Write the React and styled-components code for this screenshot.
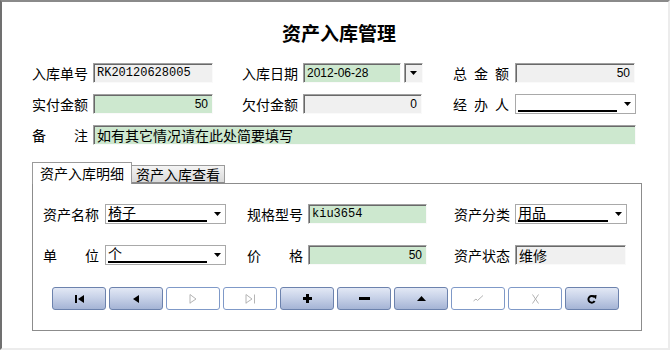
import React from "react";
import styled, { createGlobalStyle } from "styled-components";

const GlobalStyle = createGlobalStyle`
  html, body {
    margin: 0;
    padding: 0;
    background: #fff;
  }
  body {
    font-family: "Noto Sans CJK SC", "Liberation Sans", sans-serif;
    color: #000;
  }
`;

const Window = styled.div`
  width: 670px;
  height: 350px;
  box-sizing: border-box;
  border-top: 2px solid #8a8a8a;
  border-left: 2px solid #707070;
  border-right: 2px solid #ececec;
  border-bottom: 2px solid #ececec;
  background: #fff;
  display: flex;
  flex-direction: column;
`;

const Title = styled.h1`
  margin: 19px 0 0 8px;
  font-size: 19px;
  line-height: 24px;
  font-weight: bold;
  text-align: center;
`;

const Body = styled.div`
  margin-left: 30px;
  display: flex;
  flex-direction: column;
`;

const FormGrid = styled.div`
  display: grid;
  grid-template-columns: ${(p) => p.$cols};
  grid-auto-rows: 20px;
  row-gap: ${(p) => p.$rowGap}px;
`;

const Cell = styled.div`
  display: flex;
  align-items: center;
  gap: ${(p) => p.$gap || 5}px;
  grid-column: ${(p) => (p.$span ? "1 / -1" : "auto")};
`;

const LabelBox = styled.div`
  width: 56px;
  flex-shrink: 0;
  display: flex;
  justify-content: space-between;
  font-size: 14px;
  line-height: 20px;
`;

const Label = ({ text }) => (
  <LabelBox>
    {[...text].map((c, i) => (
      <span key={i}>{c}</span>
    ))}
  </LabelBox>
);

const fonts = {
  mono: `font-family: "Liberation Mono", "Noto Sans CJK SC", monospace; font-size: 12px;`,
  num: `font-family: "Liberation Sans", "Noto Sans CJK SC", sans-serif; font-size: 12px;`,
  cjk: `font-family: "Noto Sans CJK SC", "Liberation Sans", sans-serif; font-size: 14px;`,
};

const Field = styled.div`
  box-sizing: border-box;
  width: ${(p) => p.$w}px;
  height: 20px;
  flex-shrink: 0;
  background: ${(p) => (p.$tone === "green" ? "#cde8cf" : "#f0f0f0")};
  border-top: 1px solid #a0a0a0;
  border-left: 1px solid #a0a0a0;
  border-right: 1px solid #fafafa;
  border-bottom: 1px solid #fafafa;
  box-shadow: inset 1px 1px 0 #696969;
  padding: 0 4px 0 3px;
  text-align: ${(p) => p.$align || "left"};
  ${(p) => fonts[p.$font || "cjk"]}
  line-height: 18px;
  white-space: nowrap;
  overflow: hidden;
`;

const DropBox = styled(Field)`
  display: flex;
  align-items: center;
  justify-content: center;
  padding: 0;
`;

const Combo = styled.div`
  box-sizing: border-box;
  width: ${(p) => p.$w}px;
  height: 20px;
  flex-shrink: 0;
  border: 1px solid #a9a9a9;
  background: #fff;
  display: flex;
  align-items: flex-end;
  gap: 7px;
  padding: 0 4px 0 2px;
`;

const ComboText = styled.div`
  flex: 1;
  height: 15px;
  margin-bottom: 1px;
  border-bottom: 2px solid #000;
  font-size: 14px;
  line-height: 15px;
  white-space: nowrap;
`;

const ComboArrow = styled.div`
  align-self: center;
  display: flex;
`;

const Arrow = () => (
  <svg width="7" height="4" viewBox="0 0 7 4">
    <path d="M0 0 H7 L3.5 4 Z" fill="#000" />
  </svg>
);

const ComboBox = ({ w, value }) => (
  <Combo $w={w}>
    <ComboText>{value}</ComboText>
    <ComboArrow>
      <Arrow />
    </ComboArrow>
  </Combo>
);

const DateBox = styled.div`
  display: flex;
  gap: 3px;
`;

const TabBar = styled.div`
  margin-top: 17px;
  height: 21px;
  display: flex;
  align-items: flex-end;
`;

const Tab = styled.div`
  box-sizing: border-box;
  position: relative;
  z-index: 1;
  width: ${(p) => p.$w}px;
  height: ${(p) => (p.$active ? 22 : 18)}px;
  margin-bottom: ${(p) => (p.$active ? -1 : 0)}px;
  border: 1px solid #9a9a9a;
  border-left: ${(p) => (p.$active ? "1px solid #9a9a9a" : "none")};
  border-bottom: ${(p) => (p.$active ? "none" : "1px solid #8c8c8c")};
  background: ${(p) =>
    p.$active ? "#fff" : "linear-gradient(#f4f4f4, #d9d9d9)"};
  font-size: 14px;
  line-height: ${(p) => (p.$active ? 20 : 17)}px;
  padding-left: ${(p) => (p.$active ? 7 : 4)}px;
  white-space: nowrap;
`;

const Panel = styled.div`
  box-sizing: border-box;
  width: 610px;
  height: 148px;
  border: 1px solid #8c8c8c;
  padding: 20px 0 0 10px;
  display: flex;
  flex-direction: column;
`;

const NavBar = styled.div`
  margin: 22px 0 0 9px;
  display: flex;
  gap: 3px;
`;

const NavButton = styled.div`
  box-sizing: border-box;
  width: 54px;
  height: 23px;
  border-radius: 3px;
  display: flex;
  align-items: center;
  justify-content: center;
  border: 1px solid ${(p) => (p.$disabled ? "#7f99c8" : "#6c82ad")};
  background: ${(p) =>
    p.$disabled
      ? "#fff"
      : "linear-gradient(#e2e8f5 0%, #c8d2e8 45%, #a5b4d5 100%)"};
`;

const G = "#b4b4b4";

const icons = {
  first: (
    <svg width="9" height="8" viewBox="0 0 9 8">
      <rect x="0" y="0" width="2" height="8" fill="#000" />
      <path d="M9 0 L3 4 L9 8 Z" fill="#000" />
    </svg>
  ),
  prior: (
    <svg width="6" height="8" viewBox="0 0 6 8">
      <path d="M6 0 L0 4 L6 8 Z" fill="#000" />
    </svg>
  ),
  next: (
    <svg width="8" height="10" viewBox="0 0 8 10">
      <path d="M1 0.5 V9.5 M1 0.5 L7 5 L1 9" stroke={G} fill="none" />
    </svg>
  ),
  last: (
    <svg width="11" height="10" viewBox="0 0 11 10">
      <path d="M1 0.5 V9.5 M1 0.5 L7 5 L1 9 M9.5 0.5 V9.5" stroke={G} fill="none" />
    </svg>
  ),
  insert: (
    <svg width="9" height="9" viewBox="0 0 9 9">
      <path d="M3 0 H6 V3 H9 V6 H6 V9 H3 V6 H0 V3 H3 Z" fill="#000" />
    </svg>
  ),
  delete: (
    <svg width="11" height="3" viewBox="0 0 11 3">
      <rect width="11" height="3" fill="#000" />
    </svg>
  ),
  edit: (
    <svg width="9" height="5" viewBox="0 0 9 5">
      <path d="M4.5 0 L9 5 H0 Z" fill="#000" />
    </svg>
  ),
  post: (
    <svg width="11" height="7" viewBox="0 0 11 7">
      <path d="M0.5 6 L3 4 L4.5 5.5 L10 0.5" stroke={G} fill="none" />
    </svg>
  ),
  cancel: (
    <svg width="9" height="10" viewBox="0 0 9 10">
      <path d="M1.5 0.5 L7.5 9.5 M7.5 0.5 L1.5 9.5" stroke={G} fill="none" />
    </svg>
  ),
  refresh: (
    <svg width="10" height="10" viewBox="0 0 10 10">
      <path d="M7.2 3.2 A3.3 3.3 0 1 0 7.6 7" stroke="#000" strokeWidth="2" fill="none" />
      <path d="M5.2 1.6 L9.6 1 L9 5.2 Z" fill="#000" />
    </svg>
  ),
};

const buttons = [
  { key: "first" },
  { key: "prior" },
  { key: "next", disabled: true },
  { key: "last", disabled: true },
  { key: "insert" },
  { key: "delete" },
  { key: "edit" },
  { key: "post", disabled: true },
  { key: "cancel", disabled: true },
  { key: "refresh" },
];

export default function App() {
  return (
    <Window>
      <GlobalStyle />
      <Title>资产入库管理</Title>
      <Body>
        <FormGrid $cols="210px 211px 183px" $rowGap={11} style={{ marginTop: 18 }}>
          <Cell>
            <Label text="入库单号" />
            <Field $w={120} $font="mono">RK20120628005</Field>
          </Cell>
          <Cell>
            <Label text="入库日期" />
            <DateBox>
              <Field $w={98} $tone="green" $font="num">2012-06-28</Field>
              <DropBox $w={19}>
                <Arrow />
              </DropBox>
            </DateBox>
          </Cell>
          <Cell $gap={6}>
            <Label text="总金额" />
            <Field $w={120} $font="num" $align="right">50</Field>
          </Cell>
          <Cell>
            <Label text="实付金额" />
            <Field $w={120} $tone="green" $font="num" $align="right">50</Field>
          </Cell>
          <Cell>
            <Label text="欠付金额" />
            <Field $w={119} $font="num" $align="right">0</Field>
          </Cell>
          <Cell $gap={6}>
            <Label text="经办人" />
            <ComboBox w={121} value="" />
          </Cell>
          <Cell $span>
            <Label text="备注" />
            <Field $w={543} $tone="green">如有其它情况请在此处简要填写</Field>
          </Cell>
        </FormGrid>

        <TabBar>
          <Tab $active $w={100}>资产入库明细</Tab>
          <Tab $w={93}>资产入库查看</Tab>
        </TabBar>
        <Panel>
          <FormGrid $cols="204px 207px 172px" $rowGap={21}>
            <Cell $gap={6}>
              <Label text="资产名称" />
              <ComboBox w={121} value="椅子" />
            </Cell>
            <Cell>
              <Label text="规格型号" />
              <Field $w={119} $tone="green" $font="mono">kiu3654</Field>
            </Cell>
            <Cell>
              <Label text="资产分类" />
              <ComboBox w={112} value="用品" />
            </Cell>
            <Cell $gap={6}>
              <Label text="单位" />
              <ComboBox w={121} value="个" />
            </Cell>
            <Cell>
              <Label text="价格" />
              <Field $w={119} $tone="green" $font="num" $align="right">50</Field>
            </Cell>
            <Cell>
              <Label text="资产状态" />
              <Field $w={111}>维修</Field>
            </Cell>
          </FormGrid>
          <NavBar>
            {buttons.map((b) => (
              <NavButton key={b.key} $disabled={b.disabled}>
                {icons[b.key]}
              </NavButton>
            ))}
          </NavBar>
        </Panel>
      </Body>
    </Window>
  );
}
